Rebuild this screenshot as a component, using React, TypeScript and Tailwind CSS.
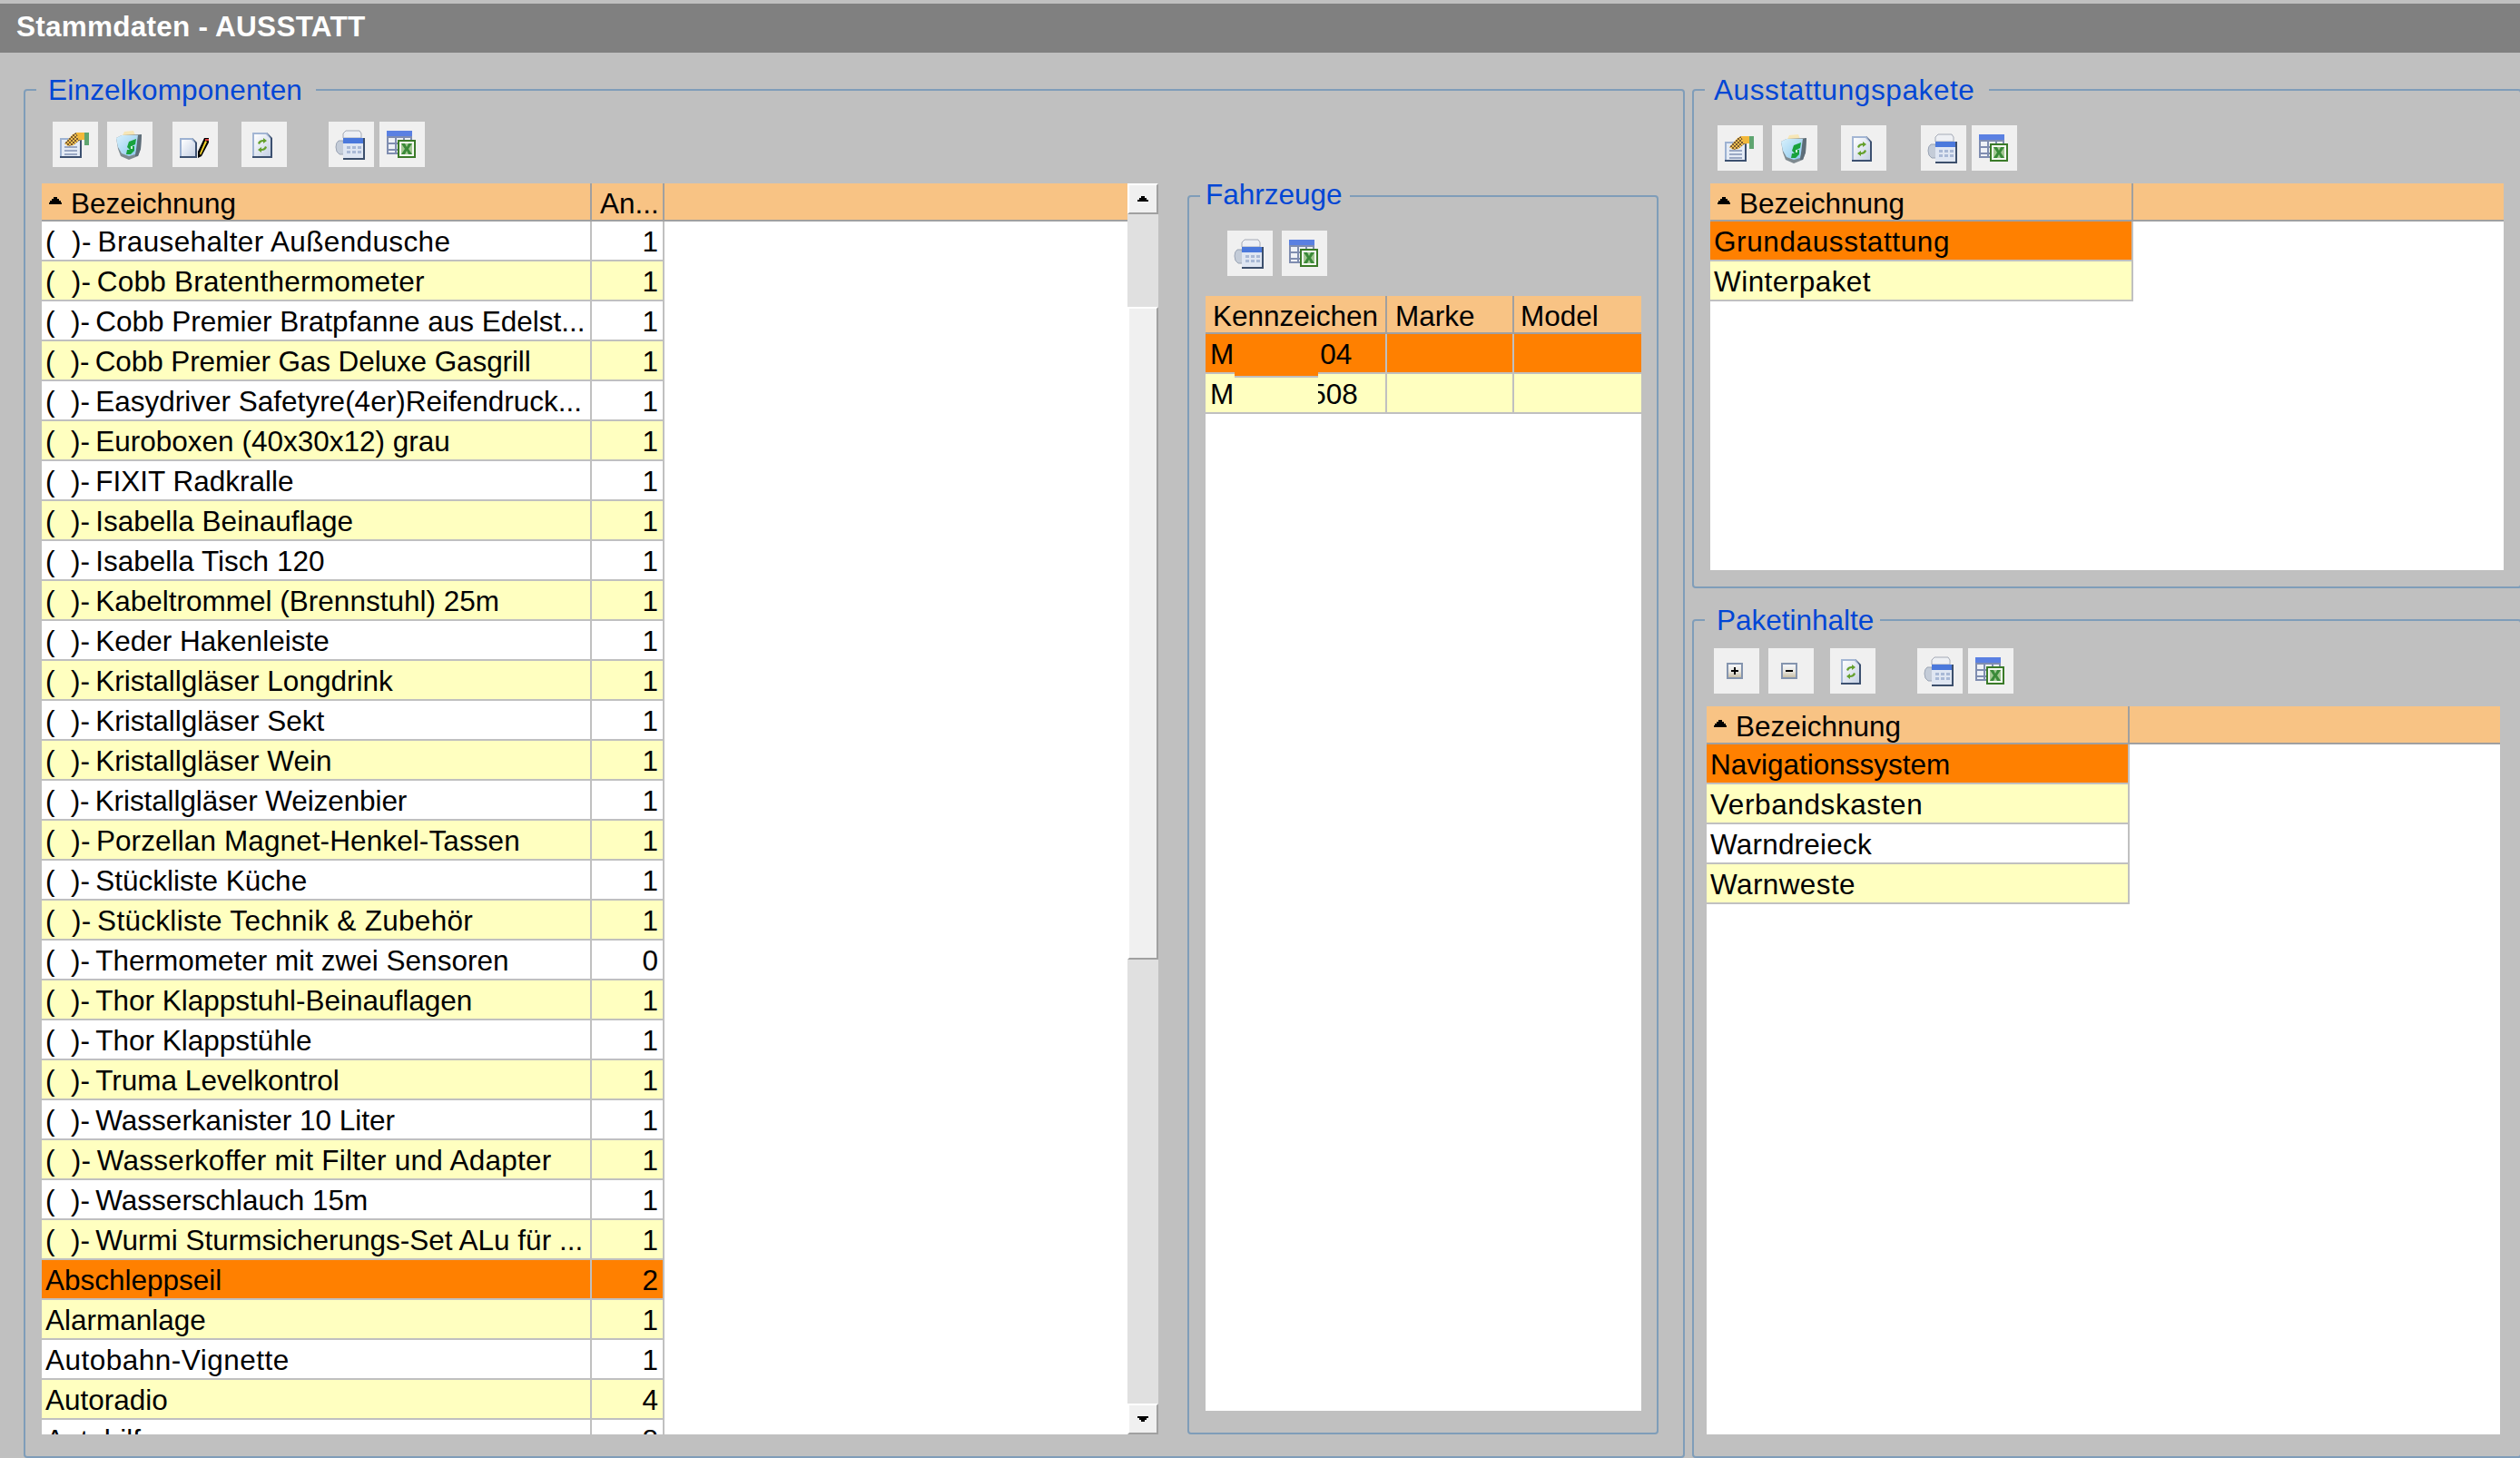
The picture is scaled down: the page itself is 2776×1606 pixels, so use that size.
import React from 'react';

const Defs = () => (
  <defs>
    <linearGradient id="docFill" x1="0" y1="0" x2="1" y2="1">
      <stop offset="0" stopColor="#ffffff" />
      <stop offset="1" stopColor="#c4d0e4" />
    </linearGradient>
    <linearGradient id="keyFill" x1="0" y1="0" x2="0" y2="1">
      <stop offset="0" stopColor="#f4f6f8" />
      <stop offset="0.55" stopColor="#e8e6e0" />
      <stop offset="1" stopColor="#c8bfa6" />
    </linearGradient>
    <linearGradient id="binFill" x1="0" y1="0" x2="1" y2="1">
      <stop offset="0" stopColor="#d8f0fc" />
      <stop offset="1" stopColor="#8ac8ee" />
    </linearGradient>
    <pattern id="checker" width="4" height="4" patternUnits="userSpaceOnUse">
      <rect width="4" height="4" fill="#f0c050" />
      <rect width="2" height="2" fill="#7a5a30" />
      <rect x="2" y="2" width="2" height="2" fill="#7a5a30" />
    </pattern>
  </defs>
);

const IconSvg = ({ children }: { children: React.ReactNode }) => (
  <svg width="50" height="50" viewBox="0 0 50 50" className="block">
    <Defs />
    {children}
  </svg>
);

const IconProps = () => (
  <IconSvg>
    <rect x="8" y="18" width="24" height="22" fill="#3c5070" />
    <rect x="8" y="18" width="22" height="20" fill="#9db2d2" />
    <rect x="10" y="20" width="20" height="18" fill="#e4ebf5" />
    <rect x="13" y="27" width="14" height="2" fill="#9aa8c4" />
    <rect x="13" y="31" width="14" height="2" fill="#9aa8c4" />
    <rect x="13" y="35" width="14" height="2" fill="#9aa8c4" />
    <path d="M13 24 L22 14 L26 12 L35 12 L35 19 L29 21 L23 26 L17 27 Z" fill="url(#checker)" />
    <path d="M26 12 L35 12 L35 20 L29 20 Z" fill="#f2b83a" />
    <rect x="35" y="12" width="5" height="14" fill="#5fa570" />
  </IconSvg>
);

const IconBin = () => (
  <IconSvg>
    <path d="M17 15 L19 11 L29 10 L31 15 Z" fill="#f7e6b6" />
    <path d="M10 18 L16 15 L38 14 L37 30 L34 38 L24 42 L15 38 L12 30 Z" fill="#7f8a90" />
    <path d="M10 18 L16 15 L34 15 L33 30 L31 36 L24 38 L16 35 L12 28 Z" fill="url(#binFill)" />
    <path d="M34 15 L38 14 L37 30 L34 38 L31 38 Z" fill="#5d6d78" />
    <path d="M24 22 L32 19 L31 25 L27 27 L30 27 L30 32 L26 36 L21 36 L22 31 L25 31 L22 28 Z" fill="#18a23c" />
    <rect x="26" y="27" width="2" height="3" fill="#c8f0d0" />
  </IconSvg>
);

const IconDocPen = () => (
  <IconSvg>
    <path d="M8 18 L22 18 L27 23 L27 40 L8 40 Z" fill="#3c5070" />
    <path d="M8 18 L22 18 L25 23 L25 38 L8 38 Z" fill="#9db2d2" />
    <path d="M10 20 L21 20 L25 24 L25 38 L10 38 Z" fill="url(#docFill)" />
    <path d="M28 40 L28 33 L35 18 L40 18 L40 23 L32 38 Z" fill="#000000" />
    <path d="M30 35 L36 21 L38 22 L31 37 Z" fill="#f4d22a" />
    <rect x="36" y="19" width="4" height="2" fill="#d84040" />
  </IconSvg>
);

const IconRefresh = () => (
  <IconSvg>
    <path d="M12 12 L28 12 L34 18 L34 40 L12 40 Z" fill="#3c5070" />
    <path d="M12 12 L28 12 L32 18 L32 38 L12 38 Z" fill="#a3b6d4" />
    <path d="M14 14 L27 14 L32 19 L32 38 L14 38 Z" fill="url(#docFill)" />
    <path d="M18 24 Q19 20 24 20 L24 18 L28 21 L24 24 L24 22 Q21 22 20 25 Z" fill="#64a02c" />
    <path d="M28 28 Q27 32 22 32 L22 34 L18 31 L22 28 L22 30 Q25 30 26 27 Z" fill="#64a02c" />
  </IconSvg>
);

const IconPrint = () => (
  <IconSvg>
    <path d="M16 21 L11 21 Q8 23 8 28 Q8 34 12 36 L18 36 Z" fill="#c4ccd8" stroke="#9aa4b4" />
    <path d="M16 18 L16 13 L19 10 L34 10 L36 13 L36 18 Z" fill="#eef0f4" stroke="#a4aab6" />
    <rect x="16" y="18" width="24" height="24" fill="#3c4f6c" />
    <rect x="16" y="18" width="22" height="6" fill="#4a78dc" />
    <rect x="16" y="24" width="22" height="16" fill="#dfe6f2" />
    <path d="M20 27h4v3h-4zM26 27h4v3h-4zM32 27h4v3h-4zM20 32h4v3h-4zM26 32h4v3h-4zM32 32h4v3h-4z" fill="#a9b9d6" />
  </IconSvg>
);

const IconExcel = () => (
  <IconSvg>
    <rect x="8" y="10" width="28" height="26" fill="#7f8db0" />
    <rect x="8" y="10" width="28" height="6" fill="#5a80e2" />
    <path d="M10 18h7v5h-7zM19 18h7v5h-7zM28 18h6v5h-6zM10 25h7v5h-7zM19 25h7v5h-7zM28 25h6v5h-6zM10 32h7v2h-7zM19 32h7v2h-7z" fill="#eef1f6" />
    <rect x="20" y="20" width="20" height="20" fill="#3a7a28" />
    <rect x="22" y="22" width="16" height="16" fill="#f4f8f0" />
    <rect x="24" y="24" width="12" height="12" fill="#a4c894" />
    <path d="M24 24h4l2 4 2-4h4l-4 6 4 6h-4l-2-4-2 4h-4l4-6z" fill="#3a8a38" />
  </IconSvg>
);

const IconPlus = () => (
  <IconSvg>
    <rect x="14" y="16" width="18" height="18" fill="#8494ae" />
    <rect x="16" y="18" width="14" height="14" fill="url(#keyFill)" />
    <rect x="19" y="24" width="8" height="2" fill="#000000" />
    <rect x="22" y="21" width="2" height="8" fill="#000000" />
  </IconSvg>
);

const IconMinus = () => (
  <IconSvg>
    <rect x="14" y="16" width="18" height="18" fill="#8494ae" />
    <rect x="16" y="18" width="14" height="14" fill="url(#keyFill)" />
    <rect x="19" y="24" width="8" height="2" fill="#000000" />
  </IconSvg>
);

const Btn = ({ children, className = '' }: { children: React.ReactNode; className?: string }) => (
  <button className={`w-[50px] h-[50px] shrink-0 bg-[#f0f0f0] block ${className}`}>{children}</button>
);

const SortArrow = () => (
  <svg width="14" height="8" viewBox="0 0 14 8" className="shrink-0 ml-[8px] mr-[10px] -mt-[6px]">
    <path d="M5 0h4v2h2v2h2v2h1v2H0V6h1V4h2V2h2z" fill="#000" />
  </svg>
);

const ScrollBtn = ({ down }: { down?: boolean }) => (
  <div className="h-[34px] w-[34px] shrink-0 bg-[#f0f0f0] border-t-2 border-l-2 border-t-white border-l-white border-r-2 border-b-2 border-r-[#a0a0a0] border-b-[#a0a0a0] flex items-center justify-center">
    <svg width="12" height="6" viewBox="0 0 12 6" className={down ? 'rotate-180' : ''}>
      <path d="M4 0h4v2h2v2h2v2H0V4h2V2h2z" fill="#000" />
    </svg>
  </div>
);

type Row = [string, number, string?];
const P = '(\u00A0\u00A0)-\u2009';
const rows: Row[] = [
  [P + 'Brausehalter Außendusche', 1, 'tracking-[0.37px]'],
  [P + 'Cobb Bratenthermometer', 1, 'tracking-[0.25px]'],
  [P + 'Cobb Premier Bratpfanne aus Edelst...', 1],
  [P + 'Cobb Premier Gas Deluxe Gasgrill', 1, 'tracking-[-0.1px]'],
  [P + 'Easydriver Safetyre(4er)Reifendruck...', 1],
  [P + 'Euroboxen (40x30x12) grau', 1],
  [P + 'FIXIT Radkralle', 1],
  [P + 'Isabella Beinauflage', 1],
  [P + 'Isabella Tisch 120', 1],
  [P + 'Kabeltrommel (Brennstuhl) 25m', 1],
  [P + 'Keder Hakenleiste', 1],
  [P + 'Kristallgläser Longdrink', 1],
  [P + 'Kristallgläser Sekt', 1],
  [P + 'Kristallgläser Wein', 1],
  [P + 'Kristallgläser Weizenbier', 1, 'tracking-[-0.1px]'],
  [P + 'Porzellan Magnet-Henkel-Tassen', 1, 'tracking-[0.1px]'],
  [P + 'Stückliste Küche', 1],
  [P + 'Stückliste Technik & Zubehör', 1, 'tracking-[0.3px]'],
  [P + 'Thermometer mit zwei Sensoren', 0],
  [P + 'Thor Klappstuhl-Beinauflagen', 1],
  [P + 'Thor Klappstühle', 1],
  [P + 'Truma Levelkontrol', 1],
  [P + 'Wasserkanister 10 Liter', 1],
  [P + 'Wasserkoffer mit Filter und Adapter', 1, 'tracking-[0.25px]'],
  [P + 'Wasserschlauch 15m', 1],
  [P + 'Wurmi Sturmsicherungs-Set ALu für ...', 1],
  ['Abschleppseil', 2],
  ['Alarmanlage', 1],
  ['Autobahn-Vignette', 1, 'tracking-[0.5px]'],
  ['Autoradio', 4],
  ['Autohilfe', 8],
];

const rowBg = (i: number, selected: number) =>
  i === selected ? 'bg-[#ff8000]' : i % 2 === 1 ? 'bg-[#ffffc0]' : 'bg-white';

const cellText = 'flex items-center pt-[2px] leading-[34px] whitespace-nowrap overflow-hidden';

const SimpleTable = ({ items, bodyClass }: { items: [string, string][]; bodyClass: string }) => (
  <div className={`flex flex-col w-[874px] ${bodyClass} bg-white`}>
    <div className="flex h-[42px] shrink-0 bg-[#f8c384] border-b-2 border-b-[#a0a0a0]">
      <div className="w-[466px] flex items-center pt-[4px] leading-[34px] border-r-2 border-r-[#a0a0a0]">
        <SortArrow />
        <span>Bezeichnung</span>
      </div>
    </div>
    {items.map(([t, track], i) => (
      <div key={t} className={`w-[466px] h-[44px] shrink-0 border-b-2 border-r-2 border-[#c0c0c0] pl-[4px] ${cellText} ${track} ${rowBg(i, 0)}`}>
        {t}
      </div>
    ))}
  </div>
);

const Legend = ({ children, className }: { children: React.ReactNode; className: string }) => (
  <legend className={`h-[36px] leading-[36px] text-[#0046d5] ${className}`}>{children}</legend>
);

export default function App() {
  return (
    <div className="w-[2776px] h-[1606px] bg-[#c0c0c0] overflow-hidden pt-[4px] font-['Liberation_Sans',Arial,sans-serif] text-[31.5px] text-black">
      <div className="h-[54px] bg-[#808080] flex items-center pl-[18px] pb-[2px] font-bold text-white leading-none tracking-[0.25px]">
        Stammdaten - AUSSTATT
      </div>

      <div className="flex w-[2778px] pt-[23px]">
        {/* Einzelkomponenten */}
        <fieldset className="ml-[26px] w-[1830px] h-[1525px] shrink-0 border-2 border-[#7f9db9] rounded-[4px]">
          <Legend className="ml-[12px] pl-[13px] pr-[15px] tracking-[0.2px]">Einzelkomponenten</Legend>
          <div className="flex">
            <div className="w-[1230px] ml-[18px] shrink-0">
              <div className="flex mt-[17px] ml-[12px]">
                <Btn><IconProps /></Btn>
                <Btn className="ml-[10px]"><IconBin /></Btn>
                <Btn className="ml-[22px]"><IconDocPen /></Btn>
                <Btn className="ml-[26px]"><IconRefresh /></Btn>
                <Btn className="ml-[46px]"><IconPrint /></Btn>
                <Btn className="ml-[6px]"><IconExcel /></Btn>
              </div>
              <div className="flex mt-[18px] h-[1378px]">
                <div className="w-[1196px] bg-white overflow-hidden">
                  <div className="flex h-[42px] bg-[#f8c384] border-b-2 border-b-[#a0a0a0]">
                    <div className="w-[606px] flex items-center pt-[4px] leading-[34px] border-r-2 border-r-[#a0a0a0]">
                      <SortArrow />
                      <span>Bezeichnung</span>
                    </div>
                    <div className="w-[80px] pl-[9px] flex items-center pt-[4px] leading-[34px] border-r-2 border-r-[#a0a0a0]">An...</div>
                  </div>
                  {rows.map(([name, n, track], i) => (
                    <div key={name} className={`flex w-[686px] h-[44px] border-b-2 border-[#c0c0c0] ${rowBg(i, 26)}`}>
                      <div className={`w-[606px] pl-[4px] border-r-2 border-[#c0c0c0] ${cellText} ${track ?? ''}`}>{name}</div>
                      <div className={`w-[80px] pr-[5px] justify-end border-r-2 border-[#c0c0c0] ${cellText}`}>{n}</div>
                    </div>
                  ))}
                </div>
                <div className="w-[34px] flex flex-col">
                  <ScrollBtn />
                  <div className="h-[102px] bg-[#e0e0e0]" />
                  <div className="h-[719px] bg-[#f0f0f0] border-t-2 border-l-2 border-t-white border-l-white border-r-2 border-b-2 border-r-[#a0a0a0] border-b-[#a0a0a0]" />
                  <div className="flex-1 bg-[#e0e0e0]" />
                  <ScrollBtn down />
                </div>
              </div>
            </div>

            {/* Fahrzeuge */}
            <fieldset className="ml-[32px] mt-[81px] w-[519px] h-[1382px] shrink-0 border-2 border-[#7f9db9] rounded-[4px]">
              <Legend className="ml-[12px] pl-[6px] pr-[8px]"><span className="relative -top-[2px]">Fahrzeuge</span></Legend>
              <div className="flex mt-[20px] ml-[42px]">
                <Btn><IconPrint /></Btn>
                <Btn className="ml-[10px]"><IconExcel /></Btn>
              </div>
              <div className="relative mt-[22px] ml-[18px] w-[480px] h-[1228px] bg-white">
                <div className="flex h-[42px] bg-[#f8c384] border-b-2 border-b-[#a0a0a0]">
                  <div className="w-[200px] pl-[8px] flex items-center pt-[4px] leading-[34px] border-r-2 border-r-[#a0a0a0]">Kennzeichen</div>
                  <div className="w-[140px] pl-[9px] flex items-center pt-[4px] leading-[34px] border-r-2 border-r-[#a0a0a0]">Marke</div>
                  <div className="flex-1 pl-[7px] flex items-center pt-[4px] leading-[34px]">Model</div>
                </div>
                <div className="flex h-[44px] bg-[#ff8000] border-b-2 border-[#c0c0c0]">
                  <div className={`w-[200px] pl-[5px] border-r-2 border-[#c0c0c0] ${cellText}`}>
                    M<span className="ml-[95px]">04</span>
                  </div>
                  <div className="w-[140px] border-r-2 border-[#c0c0c0]" />
                </div>
                <div className="relative flex h-[44px] bg-[#ffffc0] border-b-2 border-[#c0c0c0]">
                  <div className={`w-[200px] pl-[5px] border-r-2 border-[#c0c0c0] ${cellText}`}>
                    M<span className="ml-[84px]">508</span>
                  </div>
                  <div className="w-[140px] border-r-2 border-[#c0c0c0]" />
                  <div className="absolute left-[32px] top-[4px] w-[92px] h-[36px] bg-[#ffffc0]" />
                </div>
                <div className="absolute left-[32px] top-[42px] w-[92px] h-[48px] bg-[#ff8000] border-b-2 border-[#c0c0c0]" />
              </div>
            </fieldset>
          </div>
        </fieldset>

        {/* Right column */}
        <div className="ml-[8px] w-[914px] shrink-0 flex flex-col gap-[17px]">
          <fieldset className="h-[567px] border-2 border-[#7f9db9] rounded-[4px]">
            <Legend className="ml-[12px] pl-[10px] pr-[15px] tracking-[0.6px]">Ausstattungspakete</Legend>
            <div className="flex mt-[21px] ml-[26px]">
              <Btn><IconProps /></Btn>
              <Btn className="ml-[10px]"><IconBin /></Btn>
              <Btn className="ml-[26px]"><IconRefresh /></Btn>
              <Btn className="ml-[38px]"><IconPrint /></Btn>
              <Btn className="ml-[6px]"><IconExcel /></Btn>
            </div>
            <div className="mt-[14px] ml-[18px]">
              <SimpleTable items={[['Grundausstattung', 'tracking-[0.6px]'], ['Winterpaket', 'tracking-[0.45px]']]} bodyClass="h-[426px]" />
            </div>
          </fieldset>

          <fieldset className="h-[941px] border-2 border-[#7f9db9] rounded-[4px]">
            <Legend className="ml-[12px] pl-[13px] pr-[7px]">Paketinhalte</Legend>
            <div className="flex mt-[13px] ml-[22px]">
              <Btn><IconPlus /></Btn>
              <Btn className="ml-[10px]"><IconMinus /></Btn>
              <Btn className="ml-[18px]"><IconRefresh /></Btn>
              <Btn className="ml-[46px]"><IconPrint /></Btn>
              <Btn className="ml-[6px]"><IconExcel /></Btn>
            </div>
            <div className="mt-[14px] ml-[14px]">
              <SimpleTable
                items={[
                  ['Navigationssystem', ''],
                  ['Verbandskasten', 'tracking-[0.6px]'],
                  ['Warndreieck', 'tracking-[0.2px]'],
                  ['Warnweste', 'tracking-[0.4px]'],
                ]}
                bodyClass="h-[802px]"
              />
            </div>
          </fieldset>
        </div>
      </div>
    </div>
  );
}
